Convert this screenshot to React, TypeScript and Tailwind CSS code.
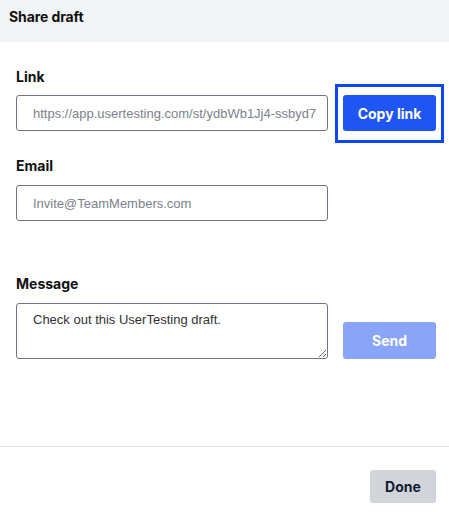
export default function App() {
  return (
    <div className="w-[449px] h-[512px] bg-white flex flex-col font-['Inter',sans-serif] text-[#111]">
      {/* Header */}
      <div className="h-[42px] bg-[#f2f4f5] px-[9px] pt-[4px]">
        <span className="text-[14px] leading-[20px] font-bold tracking-[-0.1px]">Share draft</span>
      </div>

      <div className="flex-1 flex flex-col pl-[16px] pr-[13px]">
        {/* Link */}
        <label className="mt-[25px] text-[14px] leading-[20px] font-bold">Link</label>
        <div className="mt-[8px] flex items-center gap-[15px]">
          <input
            readOnly
            value="https://app.usertesting.com/st/ydbWb1Jj4-ssbyd7"
            className="w-[312px] h-[36px] rounded-[3px] border border-[#6f7782] pl-[16px] pr-[4px] text-[13px] text-[#7b828c] font-['Liberation_Sans',sans-serif] outline-none"
          />
          <div className="relative">
            <span className="absolute top-[-11px] bottom-[-12px] left-[-8px] right-[-8px] border-[3px] border-[#0b48f5]" />
            <button className="relative w-[93px] h-[36px] rounded-[3px] bg-[#1f55f2] text-white text-[14px] font-bold">
              Copy link
            </button>
          </div>
        </div>

        {/* Email */}
        <label className="mt-[25px] text-[14px] leading-[20px] font-bold">Email</label>
        <input
          readOnly
          value="Invite@TeamMembers.com"
          className="mt-[9px] w-[312px] h-[36px] rounded-[3px] border border-[#6f7782] pl-[16px] text-[13px] text-[#7b828c] font-['Liberation_Sans',sans-serif] outline-none"
        />

        {/* Message */}
        <label className="mt-[53px] text-[14px] leading-[20px] font-bold">Message</label>
        <div className="mt-[9px] flex items-end gap-[15px]">
          <textarea
            readOnly
            defaultValue="Check out this UserTesting draft."
            className="w-[312px] h-[56px] rounded-[3px] border border-[#6f7782] pl-[16px] pt-[6px] text-[13px] text-[#333] font-['Liberation_Sans',sans-serif] outline-none"
          />
          <button className="w-[93px] h-[37px] rounded-[3px] bg-[#8aa5f7] text-white text-[14px] font-bold">
            Send
          </button>
        </div>
      </div>

      {/* Footer */}
      <div className="border-t border-[#e2e2e2] h-[66px] flex items-start justify-end pr-[13px] pt-[23px]">
        <button className="w-[66px] h-[33px] rounded-[3px] bg-[#d1d5da] text-[#0f1b33] text-[14px] font-bold">
          Done
        </button>
      </div>
    </div>
  );
}
